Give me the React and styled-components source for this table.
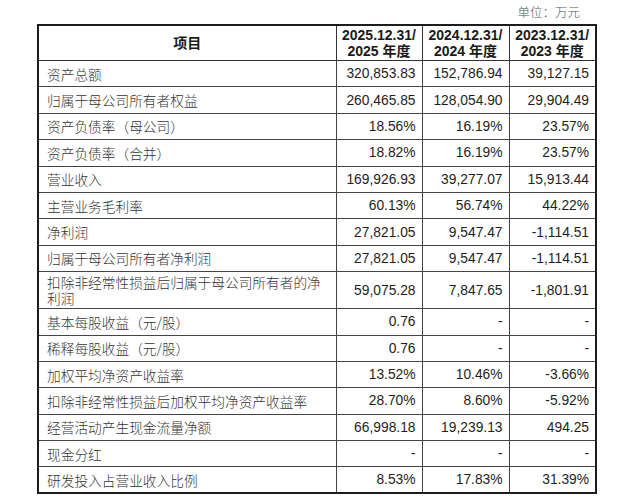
import React from "react";
import styled, { createGlobalStyle } from "styled-components";

const GlobalStyle = createGlobalStyle`
  html, body {
    margin: 0;
    padding: 0;
    background: #ffffff;
  }
  body {
    font-family: "Liberation Sans", Arial, "Noto Sans CJK SC", sans-serif;
  }
`;

const rows = [
  { label: "资产总额", values: ["320,853.83", "152,786.94", "39,127.15"] },
  { label: "归属于母公司所有者权益", values: ["260,465.85", "128,054.90", "29,904.49"] },
  { label: "资产负债率（母公司）", values: ["18.56%", "16.19%", "23.57%"] },
  { label: "资产负债率（合并）", values: ["18.82%", "16.19%", "23.57%"] },
  { label: "营业收入", values: ["169,926.93", "39,277.07", "15,913.44"] },
  { label: "主营业务毛利率", values: ["60.13%", "56.74%", "44.22%"] },
  { label: "净利润", values: ["27,821.05", "9,547.47", "-1,114.51"] },
  { label: "归属于母公司所有者净利润", values: ["27,821.05", "9,547.47", "-1,114.51"] },
  {
    label: "扣除非经常性损益后归属于母公司所有者的净利润",
    values: ["59,075.28", "7,847.65", "-1,801.91"],
    tall: true,
  },
  { label: "基本每股收益（元/股）", values: ["0.76", "-", "-"] },
  { label: "稀释每股收益（元/股）", values: ["0.76", "-", "-"] },
  { label: "加权平均净资产收益率", values: ["13.52%", "10.46%", "-3.66%"] },
  { label: "扣除非经常性损益后加权平均净资产收益率", values: ["28.70%", "8.60%", "-5.92%"] },
  { label: "经营活动产生现金流量净额", values: ["66,998.18", "19,239.13", "494.25"] },
  { label: "现金分红", values: ["-", "-", "-"] },
  { label: "研发投入占营业收入比例", values: ["8.53%", "17.83%", "31.39%"] },
];

const years = ["2025", "2024", "2023"];

export default function App() {
  return (
    <Page>
      <GlobalStyle />
      <Unit>单位：万元</Unit>
      <Table>
        <colgroup>
          <col style={{ width: 298 }} />
          <col style={{ width: 86 }} />
          <col style={{ width: 87 }} />
          <col style={{ width: 87 }} />
        </colgroup>
        <thead>
          <tr>
            <HeadCell>项目</HeadCell>
            {years.map((y) => (
              <HeadCell key={y}>
                {y}.12.31/
                <br />
                {y} 年度
              </HeadCell>
            ))}
          </tr>
        </thead>
        <tbody>
          {rows.map((r) => (
            <Row key={r.label} $tall={r.tall}>
              <Label>{r.label}</Label>
              {r.values.map((v, i) => (
                <Value key={i}>{v}</Value>
              ))}
            </Row>
          ))}
        </tbody>
      </Table>
    </Page>
  );
}

const Page = styled.div`
  width: 640px;
  height: 498px;
  box-sizing: border-box;
  padding: 4px 0 0 37px;
  overflow: hidden;
`;

const Unit = styled.div`
  width: 558px;
  box-sizing: border-box;
  padding-right: 15px;
  height: 20px;
  text-align: right;
  font-family: "Noto Sans CJK SC", sans-serif;
  font-weight: 300;
  font-size: 12.5px;
  line-height: 16px;
  color: #555;
`;

const Table = styled.table`
  width: 558px;
  table-layout: fixed;
  border-collapse: collapse;
  border: 2px solid #1c1c1c;
  color: #222;
`;

const HeadCell = styled.th`
  height: 34px;
  padding: 0 4px;
  border: 1px solid #333;
  font-family: "Liberation Sans", Arial, "Noto Sans CJK SC", sans-serif;
  font-weight: 700;
  font-size: 14px;
  line-height: 16px;
  text-align: center;
  color: #1a1a1a;
`;

const Row = styled.tr`
  height: ${(p) => (p.$tall ? "37px" : "26.4px")};
`;

const Label = styled.td`
  padding: 0 8px;
  border: 1px solid #444;
  font-family: "Noto Sans CJK SC", sans-serif;
  font-weight: 300;
  font-size: 13.7px;
  line-height: 16px;
  color: #333;
  text-align: left;
`;

const Value = styled.td`
  padding: 0 6px;
  border: 1px solid #444;
  font-family: "Liberation Sans", Arial, sans-serif;
  font-size: 13.8px;
  text-align: right;
  white-space: nowrap;
  color: #1e1e1e;
`;
